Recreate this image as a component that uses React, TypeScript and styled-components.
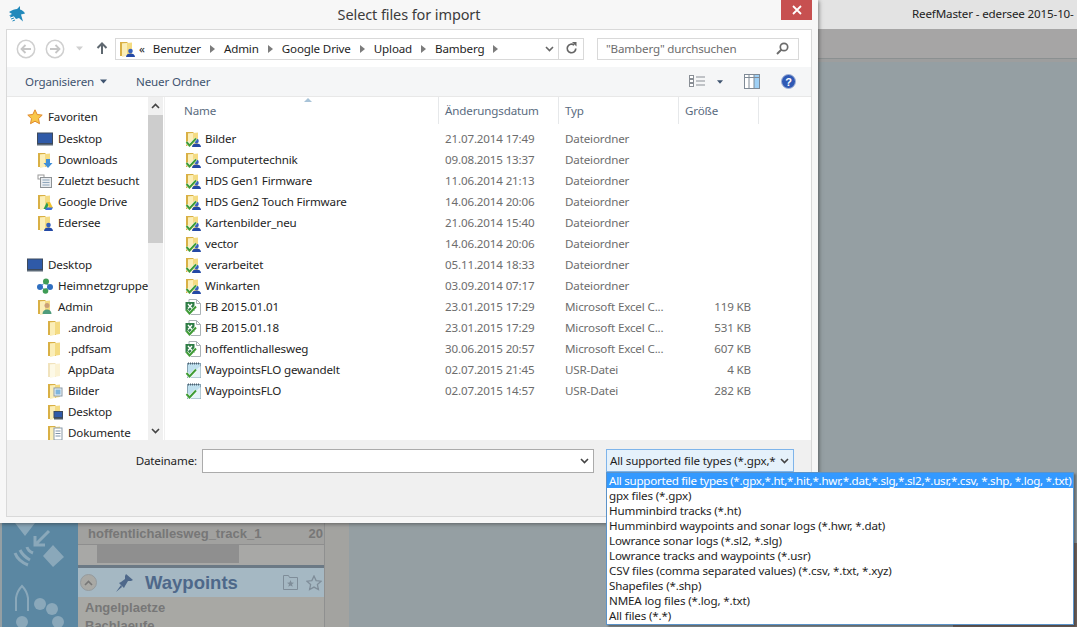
import { Fragment } from "react";
import styled, { createGlobalStyle } from "styled-components";

const GlobalStyle = createGlobalStyle`
  html, body {
    margin: 0;
    padding: 0;
    height: 100%;
    overflow: hidden;
    background: #959fa3;
  }
  * {
    box-sizing: border-box;
  }
`;

const UI_SIZE = "11.6px";

/* ---------- ReefMaster window behind the dialog ---------- */

const Desktop = styled.div`
  position: relative;
  width: 1077px;
  height: 627px;
  overflow: hidden;
  display: flex;
  flex-direction: column;
  background: #959fa3;
  font-family: "Noto Sans", "Open Sans", sans-serif;
  font-size: ${UI_SIZE};
  letter-spacing: -0.15px;
`;
const AppTitleBar = styled.div`
  height: 29px;
  flex: none;
  background: #e3e3e3;
  color: #222;
  line-height: 28px;
  padding-left: 912px;
  white-space: nowrap;
  overflow: hidden;
`;
const AppToolbar = styled.div`
  height: 30px;
  flex: none;
  background: #a6a5a5;
  border-bottom: 1px solid #8b9091;
`;
const AppStrip = styled.div`
  height: 3px;
  flex: none;
  background: #9d9e9e;
`;
const Workspace = styled.div`
  flex: 1;
  display: flex;
  padding-left: 2px;
  min-height: 0;
`;
const Rail = styled.div`
  width: 76px;
  flex: none;
  background: #5b87a2;
  display: flex;
  align-items: flex-end;
`;
const SidePanel = styled.div`
  width: 247px;
  flex: none;
  background: #a8a8a4;
  border-right: 1px solid #8f9090;
  display: flex;
  flex-direction: column;
  justify-content: flex-end;
  font-family: "Liberation Sans", Arial, sans-serif;
  font-weight: bold;
  letter-spacing: 0;
  overflow: hidden;
`;
const TrackRow = styled.div`
  height: 22px;
  display: flex;
  align-items: center;
  justify-content: space-between;
  padding: 0 1px 0 10px;
  background: #a1a19f;
  border-bottom: 1px solid #8e8e8e;
  color: #777;
  font-size: 13px;
  white-space: nowrap;
`;
const TrackScroll = styled.div`
  height: 20px;
  padding: 0 0 2px 19px;
  background: #a8a8a6;
`;
const TrackThumb = styled.div`
  width: 142px;
  height: 18px;
  background: #8f8f8f;
`;
const PanelRule = styled.div`
  height: 3px;
  background: #6b7985;
`;
const WaypointsHeader = styled.div`
  height: 29px;
  display: flex;
  align-items: center;
  padding-left: 2px;
  background: #a5b8c3;
`;
const CollapseButton = styled.div`
  width: 17px;
  height: 17px;
  flex: none;
  display: flex;
  align-items: center;
  justify-content: center;
  border-radius: 50%;
  background: #a9a9a5;
  border: 1px solid #959b9e;
`;
const PinSlot = styled.div`
  margin-left: 18px;
  width: 19px;
  height: 20px;
  flex: none;
`;
const WaypointsTitle = styled.div`
  margin-left: 11px;
  flex: 1;
  color: #4e688a;
  font-size: 18.5px;
`;
const HeaderTools = styled.div`
  display: flex;
  align-items: center;
  gap: 8px;
  padding-right: 2px;
`;
const WaypointList = styled.div`
  height: 30px;
  padding: 2px 0 0 7px;
  color: #777;
  font-size: 13px;
  line-height: 18px;
  white-space: nowrap;
`;
const Gutter = styled.div`
  width: 24px;
  flex: none;
  background: #a3a3a0;
`;
const MapTint = styled.div`
  position: absolute;
  right: 0;
  bottom: 0;
  width: 124px;
  height: 84px;
  background: #77675f;
`;

/* ---------- file dialog ---------- */

const Dialog = styled.div`
  position: absolute;
  left: 0;
  top: 0;
  width: 818px;
  height: 523px;
  display: flex;
  flex-direction: column;
  padding: 0 6px 6px;
  background: #f7f7f7;
  box-shadow: 1px 1px 4px rgba(40, 40, 40, 0.55);
`;
const DialogTitleBar = styled.div`
  height: 29px;
  flex: none;
  margin: 0 -6px;
  position: relative;
  display: flex;
  align-items: center;
  justify-content: center;
  color: #3c3c3c;
  font-size: 14.5px;
  letter-spacing: -0.1px;
  padding-bottom: 1px;
`;
const AppLogo = styled.div`
  position: absolute;
  left: 8px;
  top: 5px;
  width: 18px;
  height: 18px;
`;
const CloseButton = styled.div`
  position: absolute;
  right: 6px;
  top: 0;
  width: 31px;
  height: 20px;
  display: flex;
  align-items: center;
  justify-content: center;
  background: #c75050;
`;
const DialogFrame = styled.div`
  flex: 1;
  min-height: 0;
  display: flex;
  flex-direction: column;
  background: #fff;
  border: 1px solid #d9d9d9;
`;
const NavBar = styled.div`
  height: 37px;
  flex: none;
  display: flex;
  align-items: center;
  padding-left: 8px;
`;
const NavButton = styled.div<{ $width: number }>`
  width: ${(p) => p.$width}px;
  height: 22px;
  flex: none;
  display: flex;
  align-items: center;
  justify-content: center;
`;
const AddressBox = styled.div`
  margin-left: 3px;
  width: 469px;
  height: 22px;
  flex: none;
  display: flex;
  align-items: center;
  border: 1px solid #d9d9d9;
  background: #fff;
`;
const Crumbs = styled.div`
  flex: 1;
  display: flex;
  align-items: center;
  gap: 9px;
  padding-left: 3px;
  color: #1e1e1e;
  white-space: nowrap;
`;
const CrumbFolder = styled.span`
  display: flex;
  margin-right: -5px;
`;
const CrumbBack = styled.span`
  margin-right: -1px;
`;
const ChevronCell = styled.div`
  width: 18px;
  display: flex;
  justify-content: center;
`;
const RefreshCell = styled.div`
  width: 25px;
  height: 20px;
  display: flex;
  align-items: center;
  justify-content: center;
  border-left: 1px solid #d9d9d9;
`;
const SearchBox = styled.div`
  margin-left: 13px;
  width: 202px;
  height: 22px;
  flex: none;
  display: flex;
  align-items: center;
  justify-content: space-between;
  padding: 0 9px 0 8px;
  border: 1px solid #d9d9d9;
  color: #6d6d6d;
  white-space: nowrap;
`;
const CommandBar = styled.div`
  height: 30px;
  flex: none;
  display: flex;
  align-items: center;
  padding-left: 18px;
  background: #f5f6f7;
  border-bottom: 1px solid #e8e8e8;
  color: #3f5470;
  white-space: nowrap;
`;
const CommandItem = styled.div<{ $width: number }>`
  width: ${(p) => p.$width}px;
  flex: none;
  display: flex;
  align-items: center;
  gap: 6px;
`;
const CommandTools = styled.div`
  margin-left: auto;
  display: flex;
  align-items: center;
  padding-right: 15px;
  gap: 21px;
`;
const ViewTool = styled.div`
  display: flex;
  align-items: center;
  gap: 12px;
`;
const Browser = styled.div`
  flex: 1;
  min-height: 0;
  display: flex;
`;
const NavPane = styled.div`
  width: 141px;
  flex: none;
  padding-top: 9px;
  overflow: hidden;
`;
const NavGroup = styled.div`
  margin-bottom: 21px;
`;
const NavRow = styled.div<{ $level: number; $head?: boolean }>`
  height: 21px;
  display: flex;
  align-items: center;
  gap: 5px;
  padding-left: ${(p) => 20 + p.$level * 10}px;
  margin-bottom: ${(p) => (p.$head && p.$level === 0 ? 1 : 0)}px;
  color: #1e1e1e;
  white-space: nowrap;
`;
const Scrollbar = styled.div`
  width: 15px;
  flex: none;
  display: flex;
  flex-direction: column;
  background: #f0f0f0;
`;
const ScrollCap = styled.div`
  height: 18px;
  flex: none;
  display: flex;
  align-items: center;
  justify-content: center;
`;
const ScrollThumb = styled.div`
  height: 128px;
  flex: none;
  background: #cdcdcd;
`;
const ScrollRest = styled.div`
  flex: 1;
`;
const FilePane = styled.div`
  flex: 1;
  min-width: 0;
  margin-left: 1px;
  border-left: 1px solid #f0f0f0;
`;
const ColumnHeaders = styled.div`
  height: 23px;
  display: grid;
  grid-template-columns: 274px 120px 120px 80px;
  color: #5a6b80;
  line-height: 27px;
`;
const ColumnHead = styled.div<{ $first?: boolean }>`
  padding-left: ${(p) => (p.$first ? 19 : 6)}px;
  border-right: 1px solid #e6e8ea;
`;
const SortMark = styled.div`
  position: absolute;
  left: 304px;
  top: 98px;
  width: 0;
  height: 0;
  border-left: 4px solid transparent;
  border-right: 4px solid transparent;
  border-bottom: 4px solid #a8c3d8;
`;
const FileRows = styled.div`
  padding-top: 8px;
`;
const FileRow = styled.div`
  height: 21px;
  display: grid;
  grid-template-columns: 274px 120px 120px 72px;
  align-items: center;
  color: #6d6d6d;
  white-space: nowrap;
`;
const FileName = styled.div`
  display: flex;
  align-items: center;
  gap: 4px;
  padding-left: 20px;
  color: #1e1e1e;
`;
const FileCell = styled.div`
  padding-left: 6px;
`;
const FileSize = styled.div`
  text-align: right;
`;
const Footer = styled.div`
  height: 76px;
  flex: none;
  display: flex;
  align-items: flex-start;
  padding-top: 9px;
  background: #f0f0f0;
`;
const NameLabel = styled.label`
  width: 190px;
  height: 24px;
  flex: none;
  text-align: right;
  color: #1e1e1e;
  line-height: 23px;
`;
const NameField = styled.div`
  margin-left: 5px;
  width: 392px;
  height: 24px;
  flex: none;
  display: flex;
  align-items: center;
  background: #fff;
  border: 1px solid #ababab;
`;
const NameInput = styled.input`
  flex: 1;
  min-width: 0;
  height: 100%;
  border: 0;
  outline: 0;
  background: transparent;
`;
const TypeSelect = styled.div`
  margin-left: 12px;
  width: 188px;
  height: 23px;
  flex: none;
  display: flex;
  align-items: center;
  justify-content: space-between;
  padding: 0 4px 0 3px;
  background: #e5f1fb;
  border: 1px solid #7eb4ea;
  color: #1e1e1e;
  white-space: nowrap;
`;
const TypeMenu = styled.ul`
  position: absolute;
  left: 606px;
  top: 472px;
  width: 468px;
  height: 153px;
  margin: 0;
  padding: 0;
  list-style: none;
  background: #fff;
  border: 1px solid #5b93c9;
  box-shadow: 2px 2px 2px rgba(40, 40, 40, 0.45);
`;
const TypeOption = styled.li<{ $selected?: boolean }>`
  height: 15px;
  padding-left: 2px;
  line-height: 15px;
  white-space: nowrap;
  letter-spacing: ${(p) => (p.$selected ? "-0.27px" : "-0.15px")};
  background: ${(p) => (p.$selected ? "#3399ff" : "transparent")};
  color: ${(p) => (p.$selected ? "#fff" : "#1e1e1e")};
`;

/* ---------- drawings ---------- */

const Glyph = styled.svg`
  flex: none;
`;

type IconKind =
  | "star"
  | "monitor"
  | "downloads"
  | "recent"
  | "drive"
  | "edersee"
  | "home"
  | "admin"
  | "plain"
  | "faded"
  | "pictures"
  | "desk"
  | "docs"
  | "sync"
  | "excel"
  | "usr";

const Person = () => (
  <>
    <circle cx="11.5" cy="10" r="2.3" fill="#3560bd" />
    <path d="M7 16c0-2.6 2.2-3.6 4.500-3.600s4.500 1 4.500 3.600z" fill="#2449a6" />
  </>
);

const Check = () => (
  <>
    <path d="M1.500 11l3 3.500 6.500-7" fill="none" stroke="#fff" strokeWidth="3.2" />
    <path d="M1.500 11l3 3.500 6.500-7" fill="none" stroke="#3f9c35" strokeWidth="2" />
  </>
);

const Folder = ({ faded }: { faded?: boolean }) => (
  <g opacity={faded ? 0.35 : 1}>
    <path d="M1 1h7l1 1v13H1z" fill="#d9b045" />
    <path d="M3 2.500l10-1V14L3 15.500z" fill="#f4db82" />
    <path d="M3 2.500l5-.5v13l-5 .5z" fill="#fbeeb8" />
  </g>
);

const Icon = ({ kind }: { kind: IconKind }) => {
  let art = null;
  switch (kind) {
    case "star":
      art = (
        <path
          d="M8 .8l2.200 4.700 5 .6-3.700 3.500 1 5.100L8 12.200l-4.500 2.500 1-5.100L.8 6.100l5-.6z"
          fill="#f9c74a"
          stroke="#e08a2c"
        />
      );
      break;
    case "monitor":
      art = (
        <>
          <rect x="0.5" y="2" width="15" height="10.5" fill="#2f5aa8" stroke="#3d4a5c" />
          <rect x="0" y="13" width="16" height="1.5" fill="#5d6a78" />
        </>
      );
      break;
    case "downloads":
      art = (
        <>
          <Folder />
          <path d="M9 7h4v4h2.500L11 16l-4.500-5H9z" fill="#3f8fd8" />
        </>
      );
      break;
    case "recent":
      art = (
        <>
          <rect x="1" y="2" width="6" height="4" fill="#fff" stroke="#9a9a9a" />
          <rect x="3.5" y="4.5" width="11" height="10" fill="#e9ecef" stroke="#8d9296" />
          <path d="M5.500 7h7M5.500 9.500h7M5.500 12h7" stroke="#8fa7bc" />
        </>
      );
      break;
    case "drive":
      art = (
        <>
          <Folder />
          <path d="M10 8l-3.500 7h3l2-4z" fill="#2f9e4f" />
          <path d="M10 8h3l3 6h-3.500z" fill="#f0c22e" />
          <path d="M8 16l1.500-2.500H16L14.500 16z" fill="#3a6fd8" />
        </>
      );
      break;
    case "edersee":
      art = (
        <>
          <Folder />
          <Person />
        </>
      );
      break;
    case "home":
      art = (
        <>
          <path d="M3 8l5-3 5 3-5 4z" stroke="#6fa0c8" fill="none" />
          <circle cx="9" cy="3.5" r="3" fill="#3f9c55" />
          <circle cx="3" cy="9" r="3" fill="#2f6fc0" />
          <circle cx="13" cy="9" r="3" fill="#2f6fc0" />
          <circle cx="8.5" cy="13" r="2.8" fill="#3f9c55" />
        </>
      );
      break;
    case "admin":
      art = (
        <>
          <Folder />
          <circle cx="10" cy="6.5" r="2.5" fill="#caa077" />
          <path d="M5.500 15c0-3 2-4.500 4.500-4.500s4.500 1.500 4.500 4.500z" fill="#4f9c7c" />
        </>
      );
      break;
    case "plain":
      art = <Folder />;
      break;
    case "faded":
      art = <Folder faded />;
      break;
    case "pictures":
      art = (
        <>
          <Folder />
          <rect x="7" y="5" width="8" height="8" fill="#eef4f8" stroke="#8a9aa8" />
          <rect x="8.5" y="6.5" width="5" height="5" fill="#7fb5dc" />
        </>
      );
      break;
    case "desk":
      art = (
        <>
          <Folder />
          <rect x="7" y="7.5" width="8.5" height="6" fill="#2f5aa8" stroke="#3d4a5c" />
          <rect x="7" y="14" width="9" height="1.5" fill="#4d5a68" />
        </>
      );
      break;
    case "docs":
      art = (
        <>
          <Folder />
          <rect x="7" y="3" width="8" height="12" fill="#fff" stroke="#8a9aa8" />
          <path d="M8.500 6h5M8.500 8.500h5M8.500 11h5" stroke="#7f93a8" />
        </>
      );
      break;
    case "sync":
      art = (
        <>
          <Folder />
          <Person />
          <Check />
        </>
      );
      break;
    case "excel":
      art = (
        <>
          <path d="M4 .5h7.500l4 4v11H4z" fill="#fff" stroke="#aab2b6" />
          <path d="M11.500.5v4h4" fill="none" stroke="#aab2b6" />
          <rect x="0.5" y="3" width="9" height="9" fill="#2f7d46" />
          <path d="M3 5l4 4.500M7 5L3 9.500" stroke="#fff" strokeWidth="1.3" />
          <Check />
        </>
      );
      break;
    case "usr":
      art = (
        <>
          <rect x="2.5" y="1.5" width="13" height="14" fill="#bfe0ee" stroke="#86a2b2" />
          <path d="M3 1.500h12" stroke="#4d6272" strokeDasharray="1 1" strokeWidth="2" />
          <path d="M2.500 15.500L15.500 4v11.500z" fill="#e6f3f8" />
          <Check />
        </>
      );
      break;
  }
  return (
    <Glyph width="16" height="16" viewBox="0 0 16 16">
      {art}
    </Glyph>
  );
};

const RoundArrow = ({ flip }: { flip?: boolean }) => (
  <svg width="20" height="20" viewBox="0 0 20 20">
    <circle cx="10" cy="10" r="8.7" fill="#fff" stroke="#cfcfcf" strokeWidth="1.5" />
    <path
      d={flip ? "M5 10h9M10.500 6l4 4-4 4" : "M15 10H6M9.500 6l-4 4 4 4"}
      fill="none"
      stroke="#c6c6c6"
      strokeWidth="1.8"
    />
  </svg>
);

const Triangle = ({ color, size = 7 }: { color: string; size?: number }) => (
  <svg width={size} height={Math.ceil(size * 0.6)} viewBox="0 0 7 4">
    <path d="M0 0h7L3.500 4z" fill={color} />
  </svg>
);

const Caret = ({ up, color = "#444" }: { up?: boolean; color?: string }) => (
  <svg width="9" height="6" viewBox="0 0 9 6">
    <path
      d={up ? "M1 5l3.500-3.500L8 5" : "M1 1l3.500 3.500L8 1"}
      fill="none"
      stroke={color}
      strokeWidth="1.6"
    />
  </svg>
);

const CrumbArrow = () => (
  <svg width="5" height="8" viewBox="0 0 5 8">
    <path d="M0 0l5 4-5 4z" fill="#7c7c7c" />
  </svg>
);

const RailDrawing = () => (
  <svg width="76" height="104" viewBox="0 0 76 104">
    <g fill="#8aa8ba">
      <path d="M13 0h20L23 13zM51 22l11 12-11 10-10-11z" />
      <circle cx="38" cy="81" r="6" />
      <circle cx="50" cy="86" r="6" />
      <circle cx="20" cy="99" r="6" />
      <circle cx="56" cy="99" r="6" />
    </g>
    <g fill="none" stroke="#8aa8ba" strokeWidth="3">
      <path d="M47 8L34 21M33 13v9h10" />
      <path d="M13 30q3 8 13 12M18 27q3 6 10 10M25 24q1 4 6 6" />
      <path d="M14 88V75q1-7 6-12 5 5 6 12v13" strokeWidth="2" />
    </g>
  </svg>
);

/* ---------- data ---------- */

const favourites: { label: string; icon: IconKind }[] = [
  { label: "Desktop", icon: "monitor" },
  { label: "Downloads", icon: "downloads" },
  { label: "Zuletzt besucht", icon: "recent" },
  { label: "Google Drive", icon: "drive" },
  { label: "Edersee", icon: "edersee" },
];

const tree: { label: string; icon: IconKind; level: number }[] = [
  { label: "Heimnetzgruppe", icon: "home", level: 1 },
  { label: "Admin", icon: "admin", level: 1 },
  { label: ".android", icon: "plain", level: 2 },
  { label: ".pdfsam", icon: "plain", level: 2 },
  { label: "AppData", icon: "faded", level: 2 },
  { label: "Bilder", icon: "pictures", level: 2 },
  { label: "Desktop", icon: "desk", level: 2 },
  { label: "Dokumente", icon: "docs", level: 2 },
];

const files: { name: string; date: string; type: string; size?: string; icon: IconKind }[] = [
  { name: "Bilder", date: "21.07.2014 17:49", type: "Dateiordner", icon: "sync" },
  { name: "Computertechnik", date: "09.08.2015 13:37", type: "Dateiordner", icon: "sync" },
  { name: "HDS Gen1 Firmware", date: "11.06.2014 21:13", type: "Dateiordner", icon: "sync" },
  { name: "HDS Gen2 Touch Firmware", date: "14.06.2014 20:06", type: "Dateiordner", icon: "sync" },
  { name: "Kartenbilder_neu", date: "21.06.2014 15:40", type: "Dateiordner", icon: "sync" },
  { name: "vector", date: "14.06.2014 20:06", type: "Dateiordner", icon: "sync" },
  { name: "verarbeitet", date: "05.11.2014 18:33", type: "Dateiordner", icon: "sync" },
  { name: "Winkarten", date: "03.09.2014 07:17", type: "Dateiordner", icon: "sync" },
  { name: "FB 2015.01.01", date: "23.01.2015 17:29", type: "Microsoft Excel C...", size: "119 KB", icon: "excel" },
  { name: "FB 2015.01.18", date: "23.01.2015 17:29", type: "Microsoft Excel C...", size: "531 KB", icon: "excel" },
  { name: "hoffentlichallesweg", date: "30.06.2015 20:57", type: "Microsoft Excel C...", size: "607 KB", icon: "excel" },
  { name: "WaypointsFLO gewandelt", date: "02.07.2015 21:45", type: "USR-Datei", size: "4 KB", icon: "usr" },
  { name: "WaypointsFLO", date: "02.07.2015 14:57", type: "USR-Datei", size: "282 KB", icon: "usr" },
];

const fileTypes = [
  "All supported file types (*.gpx,*.ht,*.hit,*.hwr,*.dat,*.slg,*.sl2,*.usr,*.csv, *.shp, *.log, *.txt)",
  "gpx files (*.gpx)",
  "Humminbird tracks (*.ht)",
  "Humminbird waypoints and sonar logs (*.hwr, *.dat)",
  "Lowrance sonar logs (*.sl2, *.slg)",
  "Lowrance tracks and waypoints (*.usr)",
  "CSV files (comma separated values) (*.csv, *.txt, *.xyz)",
  "Shapefiles (*.shp)",
  "NMEA log files (*.log, *.txt)",
  "All files (*.*)",
];

const crumbs = ["Benutzer", "Admin", "Google Drive", "Upload", "Bamberg"];

const App = () => {
  return (
    <Desktop>
      <GlobalStyle />
      <AppTitleBar>ReefMaster - edersee 2015-10-</AppTitleBar>
      <AppToolbar />
      <AppStrip />
      <Workspace>
        <Rail>
          <RailDrawing />
        </Rail>
        <SidePanel>
          <TrackRow>
            <span>hoffentlichallesweg_track_1</span>
            <span>20</span>
          </TrackRow>
          <TrackScroll>
            <TrackThumb />
          </TrackScroll>
          <PanelRule />
          <WaypointsHeader>
            <CollapseButton>
              <Caret up color="#777" />
            </CollapseButton>
            <PinSlot>
              <svg width="19" height="20" viewBox="0 0 19 20">
                <path d="M11 1l7 6-2 1-3 0-3 5-1 2-5-5 2-1 4-3 0-3zM6 12L1 19l6-5z" fill="#4e688a" />
              </svg>
            </PinSlot>
            <WaypointsTitle>Waypoints</WaypointsTitle>
            <HeaderTools>
              <svg width="15" height="15" viewBox="0 0 15 15">
                <path d="M.5 14.500V.5h5l1 2h8v12z" fill="none" stroke="#7f8d99" />
                <path d="M7.500 5l1 2.500 2.500.2-2 1.600.7 2.500-2.200-1.400-2.200 1.400.7-2.500-2-1.600 2.500-.2z" fill="#7f8d99" />
              </svg>
              <svg width="16" height="16" viewBox="0 0 16 16">
                <path
                  d="M8 1l2.100 4.600 5 .6-3.700 3.400 1 5L8 12.100 3.600 14.600l1-5L.9 6.200l5-.6z"
                  fill="none"
                  stroke="#7f8d99"
                  strokeWidth="1.3"
                />
              </svg>
            </HeaderTools>
          </WaypointsHeader>
          <WaypointList>
            Angelplaetze
            <br />
            Bachlaeufe
          </WaypointList>
        </SidePanel>
        <Gutter />
      </Workspace>
      <MapTint />

      <Dialog>
        <DialogTitleBar>
          <AppLogo>
            <svg width="18" height="18" viewBox="0 0 18 18">
              <path d="M1 7c3-2 6-3 8-3l3-3v3.500c2 .5 4 2 5 4l-4 1 2 7-4-3.500-3 1-2-2.500-5-1 3-1.500z" fill="#2289bb" />
              <path d="M2 12l3-1M3 14l3-1M4.500 16l2.500-1" stroke="#2289bb" />
            </svg>
          </AppLogo>
          Select files for import
          <CloseButton>
            <svg width="10" height="10" viewBox="0 0 10 10">
              <path d="M1 1l8 8M9 1l-8 8" stroke="#fff" strokeWidth="1.8" />
            </svg>
          </CloseButton>
        </DialogTitleBar>
        <DialogFrame>
          <NavBar>
            <NavButton $width={22}>
              <RoundArrow />
            </NavButton>
            <NavButton $width={7} />
            <NavButton $width={22}>
              <RoundArrow flip />
            </NavButton>
            <NavButton $width={26}>
              <Triangle color="#d0d0d0" />
            </NavButton>
            <NavButton $width={20}>
              <svg width="12" height="13" viewBox="0 0 12 13">
                <path d="M6 12V2M1.500 6L6 1.500 10.500 6" fill="none" stroke="#5f6870" strokeWidth="2" />
              </svg>
            </NavButton>
            <AddressBox>
              <Crumbs>
                <CrumbFolder>
                  <Icon kind="edersee" />
                </CrumbFolder>
                <CrumbBack>«</CrumbBack>
                {crumbs.map((c) => (
                  <Fragment key={c}>
                    <span>{c}</span>
                    <CrumbArrow />
                  </Fragment>
                ))}
              </Crumbs>
              <ChevronCell>
                <Caret color="#666" />
              </ChevronCell>
              <RefreshCell>
                <svg width="13" height="13" viewBox="0 0 13 13">
                  <path d="M10.800 6.500a4.300 4.300 0 1 1-1.600-3.400" fill="none" stroke="#666" strokeWidth="1.7" />
                  <path d="M7 0h4.500v4.500z" fill="#666" />
                </svg>
              </RefreshCell>
            </AddressBox>
            <SearchBox>
              "Bamberg" durchsuchen
              <svg width="13" height="13" viewBox="0 0 13 13">
                <circle cx="8" cy="5" r="3.7" fill="none" stroke="#6c6c6c" strokeWidth="1.7" />
                <path d="M5.500 7.500L1 12" stroke="#6c6c6c" strokeWidth="2" />
              </svg>
            </SearchBox>
          </NavBar>
          <CommandBar>
            <CommandItem $width={111}>
              Organisieren
              <Triangle color="#3f5470" />
            </CommandItem>
            <CommandItem $width={80}>Neuer Ordner</CommandItem>
            <CommandTools>
              <ViewTool>
                <svg width="16" height="13" viewBox="0 0 16 13">
                  <rect x="0.5" y="0.5" width="4" height="3" fill="#fff" stroke="#8a8f96" />
                  <rect x="0.5" y="4.5" width="4" height="3" fill="#fff" stroke="#8a8f96" />
                  <rect x="0.5" y="8.5" width="4" height="3" fill="#fff" stroke="#8a8f96" />
                  <path d="M7 2h9M7 6h9M7 10h9" stroke="#8a8f96" />
                </svg>
                <Triangle color="#3f5470" size={6} />
              </ViewTool>
              <svg width="16" height="15" viewBox="0 0 16 15">
                <rect x="0.5" y="0.5" width="15" height="14" fill="#fff" stroke="#7f8a96" />
                <rect x="10" y="1" width="5" height="13" fill="#9fd0f5" />
                <path d="M5 1v13M10 1v13M1 3.500h14" stroke="#7f8a96" />
              </svg>
              <svg width="15" height="15" viewBox="0 0 15 15">
                <circle cx="7.5" cy="7.5" r="7" fill="#2f59b5" stroke="#a3b3d6" />
                <text x="7.5" y="11.5" fontSize="11" fontWeight="bold" fill="#fff" textAnchor="middle" fontFamily="Liberation Sans, sans-serif">
                  ?
                </text>
              </svg>
            </CommandTools>
          </CommandBar>
          <Browser>
            <NavPane>
              <NavGroup>
                <NavRow $level={0} $head>
                  <Icon kind="star" />
                  Favoriten
                </NavRow>
                {favourites.map((f) => (
                  <NavRow key={f.label} $level={1}>
                    <Icon kind={f.icon} />
                    {f.label}
                  </NavRow>
                ))}
              </NavGroup>
              <NavRow $level={0}>
                <Icon kind="monitor" />
                Desktop
              </NavRow>
              {tree.map((t) => (
                <NavRow key={t.label + t.level} $level={t.level}>
                  <Icon kind={t.icon} />
                  {t.label}
                </NavRow>
              ))}
            </NavPane>
            <Scrollbar>
              <ScrollCap>
                <Caret up />
              </ScrollCap>
              <ScrollThumb />
              <ScrollRest />
              <ScrollCap>
                <Caret />
              </ScrollCap>
            </Scrollbar>
            <FilePane>
              <ColumnHeaders>
                <ColumnHead $first>Name</ColumnHead>
                <ColumnHead>Änderungsdatum</ColumnHead>
                <ColumnHead>Typ</ColumnHead>
                <ColumnHead>Größe</ColumnHead>
              </ColumnHeaders>
              <FileRows>
                {files.map((f) => (
                  <FileRow key={f.name}>
                    <FileName>
                      <Icon kind={f.icon} />
                      {f.name}
                    </FileName>
                    <FileCell>{f.date}</FileCell>
                    <FileCell>{f.type}</FileCell>
                    <FileSize>{f.size}</FileSize>
                  </FileRow>
                ))}
              </FileRows>
            </FilePane>
          </Browser>
          <Footer>
            <NameLabel>Dateiname:</NameLabel>
            <NameField>
              <NameInput />
              <ChevronCell>
                <Caret color="#444" />
              </ChevronCell>
            </NameField>
            <TypeSelect>
              All supported file types (*.gpx,*
              <Caret color="#444" />
            </TypeSelect>
          </Footer>
        </DialogFrame>
        <SortMark />
      </Dialog>

      <TypeMenu>
        {fileTypes.map((t, i) => (
          <TypeOption key={t} $selected={i === 0}>
            {t}
          </TypeOption>
        ))}
      </TypeMenu>
    </Desktop>
  );
};

export default App;
